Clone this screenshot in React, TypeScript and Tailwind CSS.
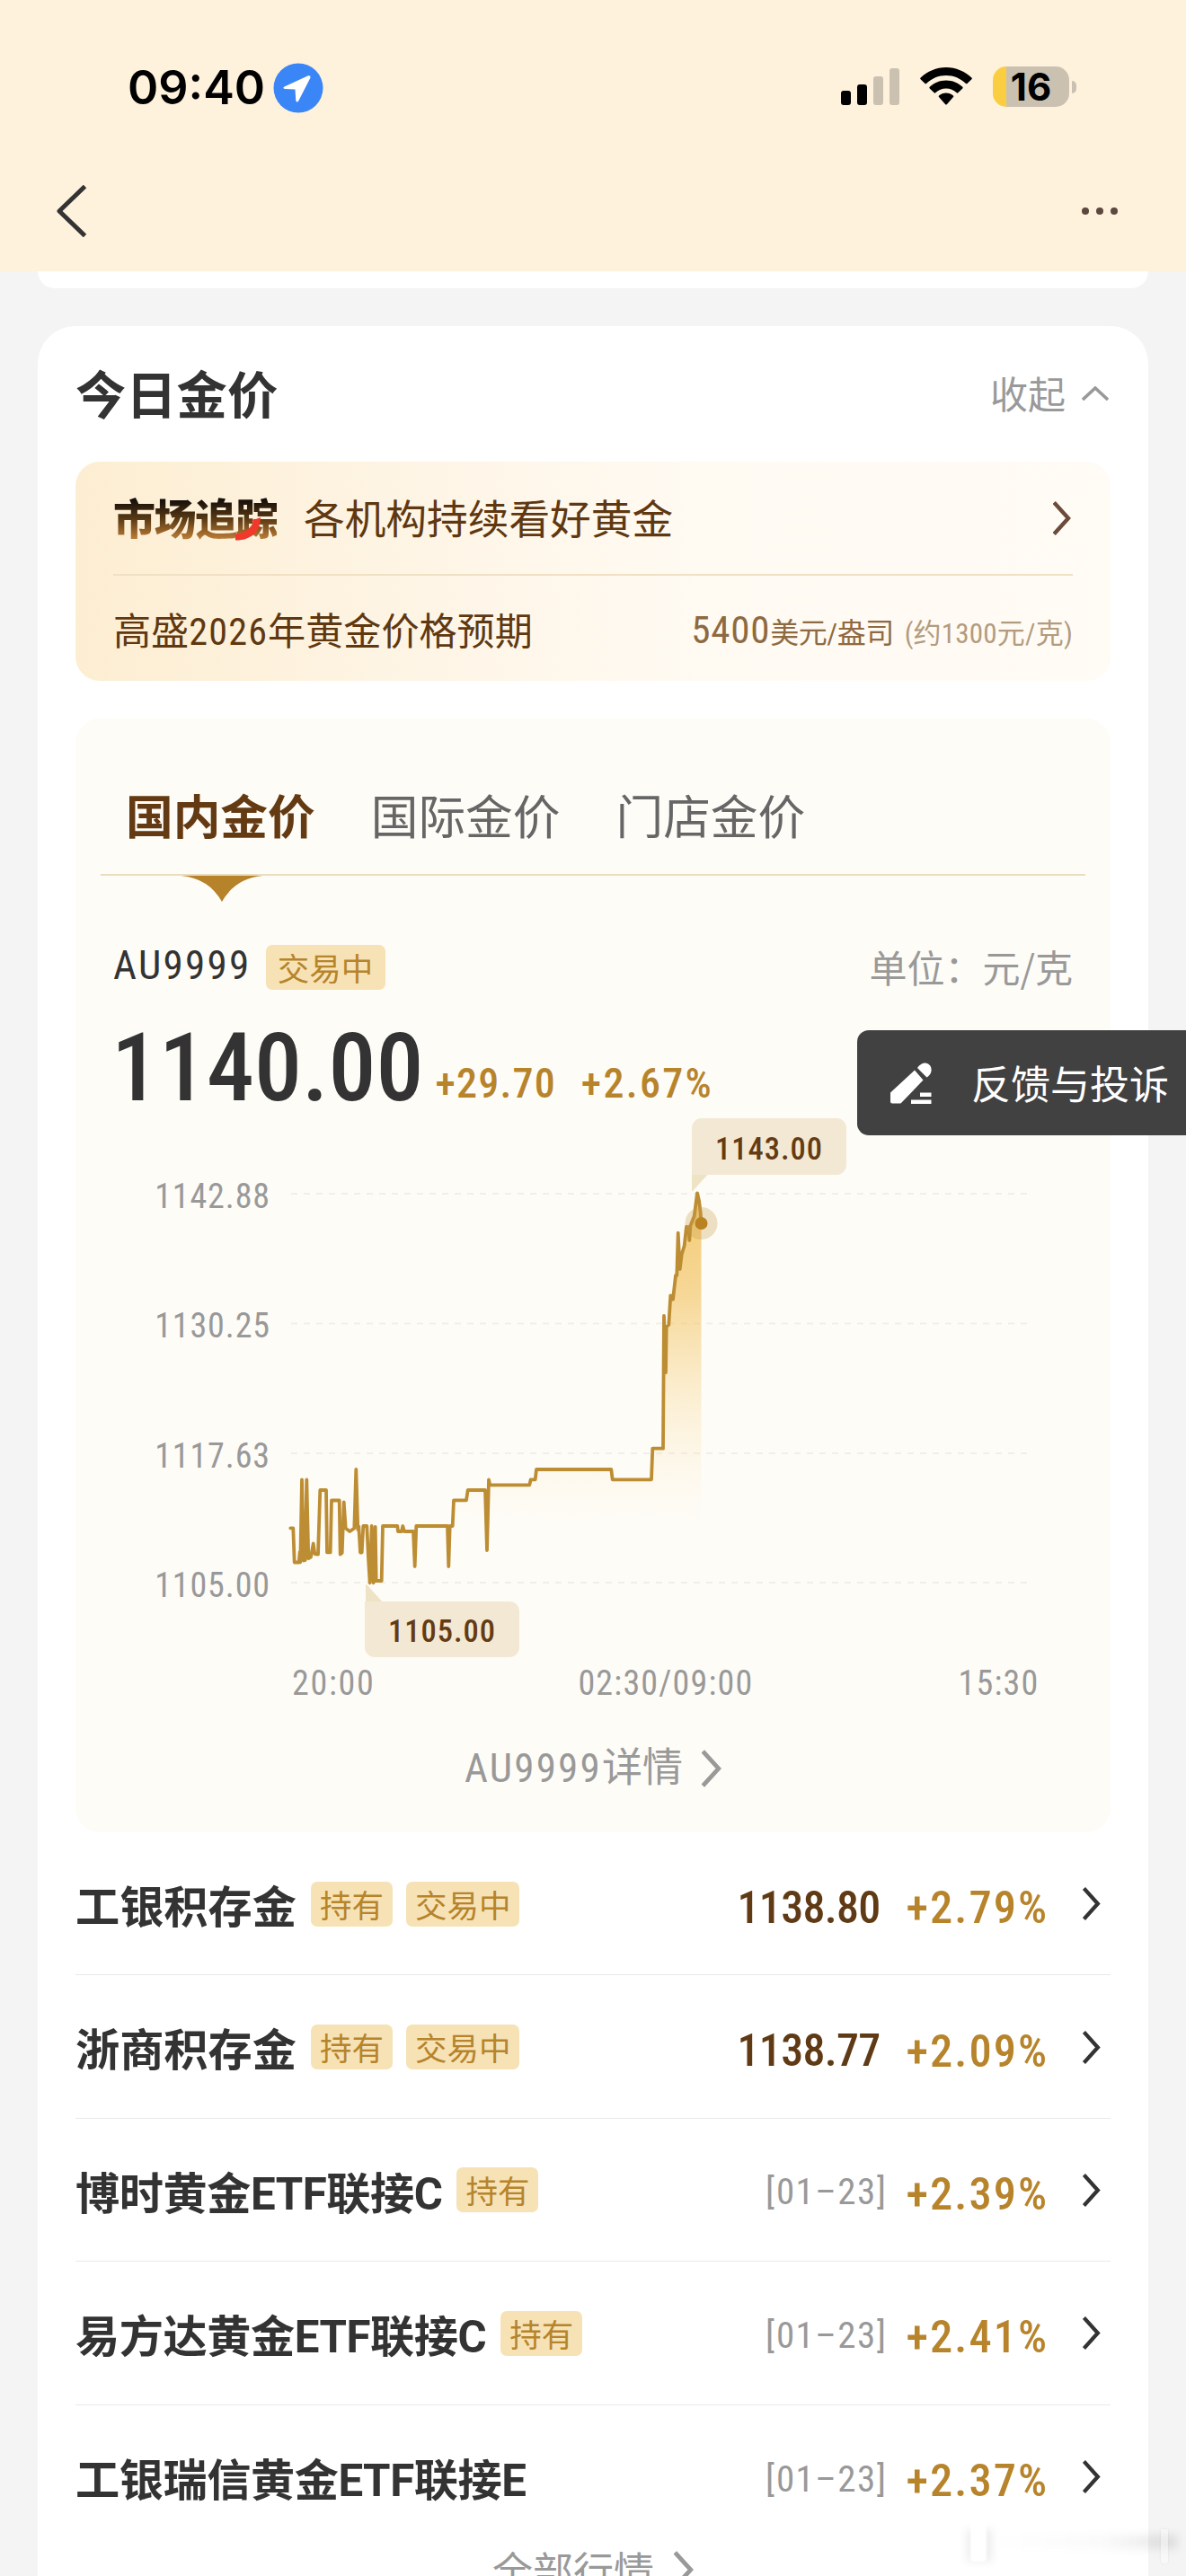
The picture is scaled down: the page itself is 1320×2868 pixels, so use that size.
import type { ReactNode } from "react";

const NUM = "font-['Roboto_Condensed','Noto_Sans_CJK_SC',sans-serif]";

function Chevron({ className }: { className: string }) {
  return (
    <svg viewBox="0 0 20 38" className={className} fill="none" stroke="currentColor" strokeWidth="4.4">
      <path d="M1.2 1.5 17 19 1.2 36.5" />
    </svg>
  );
}

function StatusBar() {
  return (
    <div className="flex h-[141px] items-start justify-between pl-[142px] pr-[122px]">
      <div className="flex items-center gap-[9px] pt-[69px]">
        <span className="text-[52px] font-semibold leading-[57px] text-black font-['Inter',sans-serif]">09:40</span>
        <svg viewBox="0 0 56 56" className="size-14">
          <circle cx="28" cy="28" r="27.5" fill="#3b86f7" />
          <path d="M39 14.300 12.500 26.500q-2.500 1.600.4 2.600l11.600.4.8 12.400q1.200 3.200 3 .4L41.500 16.500q.4-2.800-2.500-2.200z" fill="#fff" />
        </svg>
      </div>
      <div className="flex items-start pt-[74px]">
        <svg viewBox="0 0 66 42" className="mt-[2px] h-[42px] w-[66px]">
          <rect x="0" y="25" width="11" height="16" rx="3" fill="#000" />
          <rect x="18" y="18" width="11" height="23" rx="3" fill="#000" />
          <rect x="36" y="9" width="11" height="32" rx="3" fill="#cac1b1" />
          <rect x="54" y="0" width="11" height="41" rx="3" fill="#cac1b1" />
        </svg>
        <svg viewBox="0 0 58 42" className="ml-[22px] mt-px h-[42px] w-[58px]">
          <path d="M29 0C18 0 8 4.500.6 11.600q-.8.8 0 1.600L5.500 18q.7.700 1.500 0C13 12.300 20.500 9 29 9s16 3.300 22 9q.8.700 1.500 0l4.900-4.800q.8-.8 0-1.600C50 4.500 40 0 29 0z" />
          <path d="M29 14.500c-7 0-13.500 2.800-18.300 7.300q-.8.8 0 1.600l5 4.900q.7.700 1.500 0C20.500 25.200 24.500 23.500 29 23.500s8.500 1.700 11.800 4.800q.8.700 1.500 0l5-4.900q.8-.8 0-1.600C42.500 17.300 36 14.500 29 14.500z" />
          <path d="M29 28.500c-3 0-5.800 1.100-8 3q-.8.800 0 1.600l7 7.800q1 1 2 0l7-7.800q.8-.8 0-1.600c-2.200-1.900-5-3-8-3z" />
        </svg>
        <div className="ml-[23px] flex items-center">
          <div className="flex h-[45px] w-[85px] items-center justify-center rounded-[15px] bg-[linear-gradient(to_right,#fbce41_15px,#cac1b1_15px)]">
            <span className="text-[42px] font-bold leading-[45px] text-black font-['Inter',sans-serif]">16</span>
          </div>
          <div className="ml-[3px] h-[14px] w-[5px] rounded-r-full bg-[#cac1b1]" />
        </div>
      </div>
    </div>
  );
}

function NavBar() {
  return (
    <div className="flex h-[161px] items-start justify-between pl-[62px] pr-[76px] pt-[65px]">
      <svg viewBox="0 0 36 58" className="h-[58px] w-9" fill="none" stroke="#333" strokeWidth="5" strokeLinejoin="round">
        <path d="M32.500 1.500 4 29l28.500 27.500" />
      </svg>
      <svg viewBox="0 0 40 8" className="mt-[25px] h-2 w-10" fill="#5c483e">
        <circle cx="4" cy="4" r="4" />
        <circle cx="20" cy="4" r="4" />
        <circle cx="36" cy="4" r="4" />
      </svg>
    </div>
  );
}

function Tag({ children, className = "" }: { children: ReactNode; className?: string }) {
  return (
    <span className={`flex h-[50px] items-center rounded-[7px] bg-[#f7e2b6] px-[10px] text-[35.500px] leading-[50px] text-[#b6842b] ${className}`}>
      {children}
    </span>
  );
}

function TrackingBanner() {
  return (
    <section className="mt-[44px] h-[244px] rounded-[27px] bg-[linear-gradient(to_right,#fdeed2,#fef5e6_35%,#fffaf2_60%,#fffbf5)] px-[42px]">
      <div className="flex h-[127px] items-center border-b-2 border-[#f0e0c4]">
        <div className="relative mb-[3px] flex">
          <span className="bg-[linear-gradient(to_bottom,#17100a_20%,#5a3a15_55%,#b87a35_90%)] bg-clip-text text-[47px] font-black leading-[60px] tracking-[-1.500px] text-transparent">
            市场追踪
          </span>
          <svg viewBox="0 0 30 26" className="absolute bottom-[3px] right-[17px] h-[26px] w-[30px]">
            <path d="M1 18.500C11 18 19 12 21 4L17 4.500 29 0 28.500 5C27 17 17 26 1 25.500z" fill="#f0392b" />
          </svg>
        </div>
        <span className="mb-[3px] ml-[30px] text-[45.700px] leading-[60px] text-[#5f3811]">各机构持续看好黄金</span>
        <Chevron className="ml-auto mr-[2px] h-[38px] w-5 text-[#6c4a3c]" />
      </div>
      <div className="flex h-[117px] items-center justify-between pt-[4px]">
        <span className="text-[42.100px] leading-[60px] text-[#5f3811]">
          高盛<span className={`tracking-[1.200px] ${NUM}`}>2026</span>年黄金价格预期
        </span>
        <span className={`mt-[3px] flex items-baseline leading-[60px] text-[#8d6a41] ${NUM}`}>
          <span className="text-[43px] tracking-[.8px]">5400</span>
          <span className="text-[32px] tracking-[-.5px]">美元/盎司</span>
          <span className="ml-3 text-[31px] tracking-[.2px] text-[#b39b7e]">(约1300元/克)</span>
        </span>
      </div>
    </section>
  );
}

const LINE =
  "323.3,1701.3 326.3,1701.3 327.7,1739.5 332.7,1739.5 333.7,1728 334.3,1739.3 336,1647.3 338,1737.5 339.7,1737 341.3,1647.3 343.3,1735 346,1733.5 348.7,1718.5 350.3,1730 354,1730.5 356.3,1659 363,1659 364,1728.3 367.7,1728.3 369,1670.5 377.7,1670.5 378.7,1730.5 380.7,1729 382.7,1672.5 384.7,1701.5 389.3,1705 394.3,1701.5 396.3,1636 398.3,1703 399.3,1699.5 401,1728.5 402.7,1728.5 404.3,1699 408.3,1699 410,1735 411.7,1762.3 413.7,1699 415.7,1762.3 417.7,1700 418.7,1760 424.7,1760 426,1699 442.3,1699 443,1705 447,1705 448.3,1699 450,1705 460,1705 461.7,1744 463.3,1699 498,1699 499.3,1744 500.7,1699 503.7,1699 505,1670.3 519,1670.3 520.7,1659 540,1659 542,1726 544,1647.3 545.3,1653.3 589.3,1653.3 590.7,1647.3 595.7,1647.3 597,1636 680.3,1636 681.7,1647.3 725,1647.3 726.3,1612.7 738,1612.7 739,1465 741,1528 741.7,1477 744.3,1475 746.3,1442.3 749,1446.7 752,1420 753.3,1420 754.7,1372.7 756.7,1413 758.7,1396.7 761.7,1386.7 764,1365.7 766.7,1366.7 767.3,1381 768.3,1365 772.7,1354 776,1328.3 778,1336.7 779.7,1350 780.5,1362";

const Y_LABELS = ["1142.88", "1130.25", "1117.63", "1105.00"];
const GRID = [1329, 1473.500, 1618, 1762];

function PriceChart() {
  return (
    <div className="relative h-[611px]">
      <svg viewBox="84 1240 1150 611" className="absolute inset-0 h-[611px] w-[1150px]">
        <defs>
          <linearGradient id="fill" x1="0" y1="1328" x2="0" y2="1704" gradientUnits="userSpaceOnUse">
            <stop offset="0" stopColor="#f2bf55" stopOpacity=".8" />
            <stop offset=".3" stopColor="#f2c362" stopOpacity=".65" />
            <stop offset=".6" stopColor="#f5d080" stopOpacity=".32" />
            <stop offset=".8" stopColor="#fadfa8" stopOpacity=".16" />
            <stop offset="1" stopColor="#fdf0d4" stopOpacity="0" />
          </linearGradient>
        </defs>
        {GRID.map((y) => (
          <line key={y} x1="324" x2="1150" y1={y} y2={y} stroke="#f0efea" strokeWidth="2" strokeDasharray="7 7" />
        ))}
        <polygon points={`323.300,1704 ${LINE} 780.500,1704`} fill="url(#fill)" />
        <polyline points={LINE} fill="none" stroke="#bd8d33" strokeWidth="3.800" strokeLinejoin="round" strokeLinecap="round" />
        <circle cx="780.500" cy="1362" r="18" fill="#c79a45" fillOpacity=".3" />
        <circle cx="780.500" cy="1362" r="7" fill="#b98223" />
        <path d="M770 1304h21l-20 22h-1z" fill="#efe3c6" />
        <path d="M407 1786h21l-20-22h-1z" fill="#efe3c6" />
      </svg>
      <div className={`absolute left-[686px] top-[5px] flex h-[63px] w-[172px] items-center justify-center rounded-[11px] rounded-bl-none bg-[#f3e8d3] pt-[6px] text-[34.500px] font-medium tracking-[1px] text-[#643b12] ${NUM}`}>
        1143.00
      </div>
      <div className={`absolute left-[322px] top-[543px] flex h-[62px] w-[172px] items-center justify-center rounded-[11px] rounded-tl-none bg-[#f3e8d3] pt-[6px] text-[34.500px] font-medium tracking-[1px] text-[#643b12] ${NUM}`}>
        1105.00
      </div>
      <div className={`flex w-[217px] flex-col pt-[62px] text-right text-[38px] tracking-[.9px] text-[#999] ${NUM}`}>
        {Y_LABELS.map((l) => (
          <span key={l} className="mb-[84.400px] leading-[60px]">{l}</span>
        ))}
      </div>
    </div>
  );
}

function PriceCard() {
  return (
    <section className="mt-[42px] h-[1240px] rounded-[27px] bg-[#fefcf7] px-[28px]">
      <div className="flex h-[175px] items-center gap-[62px] border-b-2 border-[#eadcbf] pl-[28px] pt-[38px] text-[52.700px] leading-[76px] text-[#666]">
        <span className="font-bold text-[#643a12]">国内金价</span>
        <span>国际金价</span>
        <span>门店金价</span>
      </div>
      <svg viewBox="0 0 94 30" className="ml-[88px] h-[29px] w-[94px]">
        <path d="M0 0h94Q62 3 47 30 32 3 0 0z" fill="#b6822a" />
      </svg>
      <div className="mt-[46px] flex h-[54px] items-center px-[14px]">
        <span className={`mb-[4px] text-[45px] tracking-[2.300px] text-[#333] ${NUM}`}>AU9999</span>
        <Tag className="ml-[16px] w-[133px] justify-center">交易中</Tag>
        <span className="mb-[3px] ml-auto text-[42px] text-[#999]">单位：元/克</span>
      </div>
      <div className={`-mb-[25px] mt-[9px] flex h-[152px] items-baseline pl-[12px] font-medium ${NUM}`}>
        <span className="text-[106px] leading-[152px] text-[#333]">1140.00</span>
        <span className="relative -top-[3px] ml-[13px] text-[46px] tracking-[1.200px] text-[#b7842c]">+29.70</span>
        <span className="relative -top-[3px] ml-[28px] text-[46px] tracking-[2.300px] text-[#b7842c]">+2.67%</span>
      </div>
      <div className="-ml-[28px] w-[1150px]">
        <PriceChart />
      </div>
      <div className={`flex items-center pl-[213px] text-[38px] leading-[46px] text-[#999] ${NUM}`}>
        <span className="tracking-[1.700px]">20:00</span>
        <span className="ml-[226px] tracking-[1.200px]">02:30/09:00</span>
        <span className="ml-[228px] tracking-[1.200px]">15:30</span>
      </div>
      <div className="mt-[39px] flex items-center justify-center text-[#999]">
        <span className={`text-[45px] leading-[66px] ${NUM}`}>
          <span className="tracking-[2.200px]">AU9999</span>详情
        </span>
        <Chevron className="ml-[21px] h-[42px] w-[22px]" />
      </div>
    </section>
  );
}

type Row = { name: string; tags: string[]; value: string; pct: string };
const ROWS: Row[] = [
  { name: "工银积存金", tags: ["持有", "交易中"], value: "1138.80", pct: "+2.79%" },
  { name: "浙商积存金", tags: ["持有", "交易中"], value: "1138.77", pct: "+2.09%" },
  { name: "博时黄金ETF联接C", tags: ["持有"], value: "[01–23]", pct: "+2.39%" },
  { name: "易方达黄金ETF联接C", tags: ["持有"], value: "[01–23]", pct: "+2.41%" },
  { name: "工银瑞信黄金ETF联接E", tags: [], value: "[01–23]", pct: "+2.37%" },
];

function FundRow({ row, last }: { row: Row; last: boolean }) {
  const dated = row.value.startsWith("[");
  return (
    <div className={`flex h-[159.400px] items-center pr-[11px] pt-px ${last ? "" : "border-b border-[#e9e9e9]"}`}>
      <span
        className={
          dated
            ? "-mb-[9px] text-[49.200px] font-bold leading-[70px] tracking-[-.45px] text-[#333] font-['Roboto','Noto_Sans_CJK_SC',sans-serif]"
            : "text-[49.200px] font-bold leading-[70px] text-[#333]"
        }
      >
        {row.name}
      </span>
      {row.tags.map((t, i) => (
        <Tag key={t} className={i ? "ml-[15px]" : "ml-[16px]"}>{t}</Tag>
      ))}
      <span
        className={
          dated
            ? `mt-[5px] ml-auto -mr-[3px] text-[41px] tracking-[1.500px] text-[#999] ${NUM}`
            : `mt-[9px] ml-auto mr-[5px] text-[50px] font-medium tracking-[-.7px] text-[#5f3a14] ${NUM}`
        }
      >
        {row.value}
      </span>
      <span className={`mt-[9px] ml-[24px] text-[50.500px] font-medium tracking-[2px] text-[#b7842c] ${NUM}`}>{row.pct}</span>
      <Chevron className="ml-[38px] h-[37px] w-5 text-[#333]" />
    </div>
  );
}

export default function App() {
  return (
    <div className="relative h-[2868px] w-[1320px] overflow-hidden bg-[#f4f4f4] font-['Noto_Sans_CJK_SC',sans-serif]">
      <header className="h-[302px] bg-[#fef2dd]">
        <StatusBar />
        <NavBar />
      </header>
      <div className="mx-[42px] h-[19px] rounded-b-[26px] bg-white" />
      <main className="mx-[42px] mt-[42px] h-[2560px] rounded-t-[42px] bg-white px-[42px] pt-[40px]">
        <div className="flex h-[67px] items-center justify-between">
          <h1 className="text-[56.300px] font-bold leading-[67px] text-[#333]">今日金价</h1>
          <div className="flex items-center pr-[2px] text-[#999]">
            <span className="text-[42px] leading-[67px]">收起</span>
            <svg viewBox="0 0 30 16" className="ml-[18px] mt-[2px] h-4 w-[30px]" fill="none" stroke="currentColor" strokeWidth="3.600">
              <path d="M1 15 15 2l14 13" />
            </svg>
          </div>
        </div>
        <TrackingBanner />
        <PriceCard />
        <div>
          {ROWS.map((r, i) => (
            <FundRow key={r.name} row={r} last={i === ROWS.length - 1} />
          ))}
        </div>
        <div className="-mt-[9px] flex items-center justify-center text-[#999]">
          <span className="text-[45px] leading-[66px]">全部行情</span>
          <Chevron className="ml-[22px] h-[42px] w-[22px]" />
        </div>
      </main>
      <div className="absolute left-[1070px] top-[2806px] h-[50px] w-[250px]">
        <div className="absolute left-[30px] top-[16px] h-[16px] w-[210px] bg-[linear-gradient(to_right,transparent,#00000005_60%,#00000018)] blur-[5px]" />
        <div className="absolute left-[6px] top-[10px] h-[36px] w-[28px] bg-black/[.07] blur-[5px]" />
        <div className="absolute left-[10px] top-[2px] h-[44px] w-[18px] rounded-b-[4px] bg-white blur-[1px]" />
        <div className="absolute left-[222px] top-[10px] h-[38px] w-[8px] rounded-b-[3px] bg-white/40 shadow-[0_0_3px_rgba(0,0,0,.07)]" />
      </div>
      <button className="absolute right-0 top-[1147px] flex h-[117px] w-[366px] items-center rounded-l-[13px] bg-[#333]/[.93] pl-[37px] text-white">
        <svg viewBox="0 0 46 46" className="size-[46px]" fill="#fff">
          <path d="M0 33.500 27 8.500l9.500 11L12 45q-.5.500-2 .5H2q-2 0-2-2z" />
          <path d="M30 6q4-6 9.500-5.500 7 2 6 9-.500 4-5 7z" />
          <path d="M33 33.500h12.500V38H33zM23 41.500h22.500V46H23z" />
        </svg>
        <span className="mb-[2px] ml-[44px] whitespace-nowrap text-[44px] leading-[60px]">反馈与投诉</span>
      </button>
    </div>
  );
}
